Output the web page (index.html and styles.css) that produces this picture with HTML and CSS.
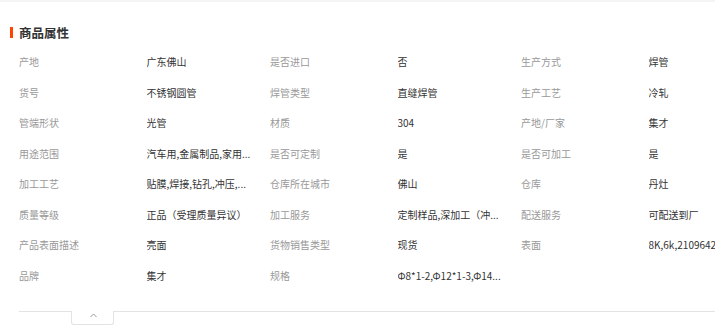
FILE: index.html
```html
<!DOCTYPE html>
<html lang="zh-CN">
<head>
<meta charset="utf-8">
<title>商品属性</title>
<link rel="stylesheet" href="styles.css">
</head>
<body>
<div class="topband"></div>
<section class="attrs">
  <h2 class="title"><span class="bar"></span><span class="title-text">商品属性</span></h2>
  <div class="grid">
    <div class="lbl">产地</div><div class="val">广东佛山</div>
    <div class="lbl">是否进口</div><div class="val">否</div>
    <div class="lbl">生产方式</div><div class="val">焊管</div>

    <div class="lbl">货号</div><div class="val">不锈钢圆管</div>
    <div class="lbl">焊管类型</div><div class="val">直缝焊管</div>
    <div class="lbl">生产工艺</div><div class="val">冷轧</div>

    <div class="lbl">管端形状</div><div class="val">光管</div>
    <div class="lbl">材质</div><div class="val">304</div>
    <div class="lbl">产地/厂家</div><div class="val">集才</div>

    <div class="lbl">用途范围</div><div class="val">汽车用,金属制品,家用...</div>
    <div class="lbl">是否可定制</div><div class="val">是</div>
    <div class="lbl">是否可加工</div><div class="val">是</div>

    <div class="lbl">加工工艺</div><div class="val">贴膜,焊接,钻孔,冲压,...</div>
    <div class="lbl">仓库所在城市</div><div class="val">佛山</div>
    <div class="lbl">仓库</div><div class="val">丹灶</div>

    <div class="lbl">质量等级</div><div class="val">正品（受理质量异议）</div>
    <div class="lbl">加工服务</div><div class="val">定制样品,深加工（冲...</div>
    <div class="lbl">配送服务</div><div class="val">可配送到厂</div>

    <div class="lbl">产品表面描述</div><div class="val">亮面</div>
    <div class="lbl">货物销售类型</div><div class="val">现货</div>
    <div class="lbl">表面</div><div class="val last">8K,6k,2109642</div>

    <div class="lbl">品牌</div><div class="val">集才</div>
    <div class="lbl">规格</div><div class="val">Φ8*1-2,Φ12*1-3,Φ14...</div>
  </div>
  <div class="foot">
    <div class="seg seg-left"></div>
    <div class="tab">
      <svg class="caret" width="7" height="5" viewBox="0 0 7 5"><polyline points="0.5,4 3.5,1 6.5,4" fill="none" stroke="#999" stroke-width="1"/></svg>
    </div>
    <div class="seg seg-right"></div>
  </div>
</section>
</body>
</html>
```

FILE: styles.css
```css
html, body {
  margin: 0;
  padding: 0;
  background: #fff;
  overflow: hidden;
}
body {
  width: 715px;
  height: 336px;
  font-family: "Noto Sans CJK SC", "Noto Sans", sans-serif;
}
.topband {
  height: 2px;
  background: #f4f4f4;
}
.attrs {
  padding-top: 20px;
}
.title {
  margin: 0;
  height: 20px;
  display: flex;
  align-items: center;
  font-size: 12.5px;
  font-weight: bold;
  color: #333;
}
.bar {
  display: block;
  width: 3px;
  height: 11px;
  margin-left: 10px;
  margin-right: 6px;
  background: #ff4400;
}
.grid {
  margin-top: 4.5px;
  padding-left: 19px;
  display: grid;
  grid-template-columns: 127.5px 123.5px 127.5px 123.5px 127.5px 1fr;
  grid-auto-rows: 30.5px;
  font-size: 10px;
}
.lbl, .val {
  display: flex;
  align-items: center;
  white-space: nowrap;
  overflow: hidden;
}
.lbl {
  color: #999;
}
.val {
  color: #333;
  padding-right: 12px;
}
.val.last {
  padding-right: 0;
}
.foot {
  margin-top: 20.5px;
  margin-left: 19px;
  display: flex;
  height: 15px;
}
.seg {
  border-top: 1px solid #e3e3e3;
}
.seg-left {
  width: 52px;
}
.seg-right {
  flex: 1;
}
.tab {
  width: 43px;
  height: 14px;
  border: 1px solid #e3e3e3;
  border-top: none;
  border-radius: 0 0 3px 3px;
  display: flex;
  justify-content: center;
  padding-top: 2px;
  box-sizing: border-box;
}
.caret {
  display: block;
  margin-left: 1px;
}
```
